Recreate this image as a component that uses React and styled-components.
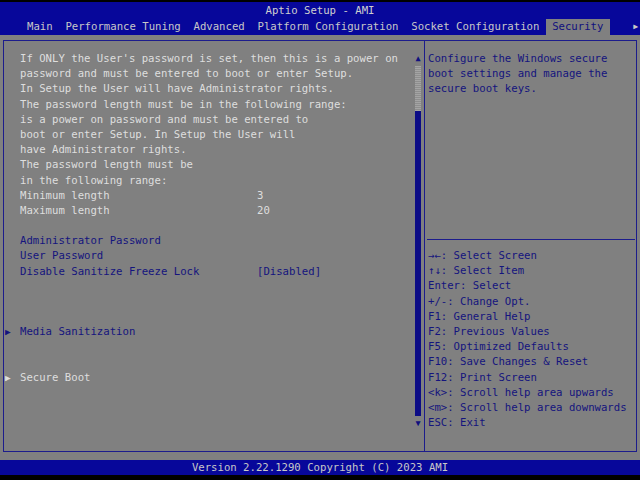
import React from 'react'
import styled, { createGlobalStyle } from 'styled-components'

const GlobalStyle = createGlobalStyle`
  html, body {
    margin: 0;
    padding: 0;
    background: #000;
  }
  * { box-sizing: border-box; }
`

const LINE = 15.2

const Screen = styled.div`
  width: 640px;
  height: 480px;
  display: flex;
  flex-direction: column;
  background: #000;
  font-family: "DejaVu Sans Mono", "Liberation Mono", monospace;
  font-size: 10.65px;
  overflow: hidden;
`
const Header = styled.div`
  margin-top: 2px;
  height: 33px;
  background: #07079a;
  display: flex;
  flex-direction: column;
`
const Title = styled.div`
  height: 17px;
  line-height: 17px;
  text-align: center;
  color: #cfcfcf;
`
const TabRow = styled.div`
  height: 16px;
  display: flex;
  align-items: stretch;
  padding-left: 20.6px;
  padding-right: 2px;
`
const Tab = styled.div`
  padding: 0 1ch;
  line-height: 16px;
  white-space: pre;
  color: ${p => (p.$active ? '#10107e' : '#c8c8c8')};
  background: ${p => (p.$active ? '#808080' : 'transparent')};
`
const TabMore = styled.div`
  margin-left: auto;
  line-height: 16px;
  font-size: 8px;
  color: #c8c8c8;
`
const Body = styled.div`
  flex: 1;
  background: #808080;
  padding: 5px 3px 8px 3px;
  display: flex;
`
const Frame = styled.div`
  flex: 1;
  display: flex;
  border: 1px solid #1c1c8c;
`
const LeftPanel = styled.div`
  width: 421px;
  display: flex;
  border-right: 1px solid #1c1c8c;
`
const Lines = styled.div`
  flex: 1;
  padding-top: 10px;
`
const Row = styled.div`
  height: ${LINE}px;
  line-height: ${LINE}px;
  display: flex;
  white-space: pre;
  color: ${p => (p.$tone === 'blue' ? '#14147e' : '#dedede')};
`
const Marker = styled.span`
  width: 16px;
  padding-left: 1px;
  font-size: 9.5px;
`
const Label = styled.span`
  width: 237px;
`
const Value = styled.span``

const Scroll = styled.div`
  width: 10px;
  padding: 10px 2px 0 0;
  display: flex;
  flex-direction: column;
  align-items: center;
`
const ScrollArrow = styled.div`
  height: ${LINE}px;
  line-height: ${LINE}px;
  font-size: 8.5px;
  color: #10107e;
`
const Track = styled.div`
  width: 6px;
  height: ${23 * LINE}px;
  display: flex;
  flex-direction: column;
`
const TrackLight = styled.div`
  height: 45px;
  background: repeating-linear-gradient(0deg, #a4a4a4 0 1px, #8e8e8e 1px 2px);
`
const Thumb = styled.div`
  flex: 1;
  background: #0c0c86;
`
const RightPanel = styled.div`
  flex: 1;
  padding: 10px 1px 0 2px;
  display: flex;
  flex-direction: column;
`
const HelpTop = styled.div`
  height: 189px;
  border-bottom: 1px solid #1c1c8c;
  padding-left: 1px;
`
const HelpKeys = styled.div`
  margin-top: 8px;
  padding-left: 1px;
`
const HelpLine = styled.div`
  height: ${LINE}px;
  line-height: ${LINE}px;
  white-space: pre;
  color: #14147e;
`
const Footer = styled.div`
  height: 15px;
  line-height: 15px;
  background: #07079a;
  color: #c8c8c8;
  text-align: center;
`
const BottomGap = styled.div`
  height: 5px;
  background: #000;
`

const tabs = ['Main', 'Performance Tuning', 'Advanced', 'Platform Configuration', 'Socket Configuration', 'Security']

const rows = [
  { text: "If ONLY the User's password is set, then this is a power on" },
  { text: 'password and must be entered to boot or enter Setup.' },
  { text: 'In Setup the User will have Administrator rights.' },
  { text: 'The password length must be in the following range:' },
  { text: 'is a power on password and must be entered to' },
  { text: 'boot or enter Setup. In Setup the User will' },
  { text: 'have Administrator rights.' },
  { text: 'The password length must be' },
  { text: 'in the following range:' },
  { text: 'Minimum length', value: '3' },
  { text: 'Maximum length', value: '20' },
  {},
  { text: 'Administrator Password', tone: 'blue' },
  { text: 'User Password', tone: 'blue' },
  { text: 'Disable Sanitize Freeze Lock', value: '[Disabled]', tone: 'blue' },
  {},
  {},
  {},
  { text: 'Media Sanitization', tone: 'blue', sub: true },
  {},
  {},
  { text: 'Secure Boot', sub: true },
]

const keys = [
  '\u2192\u2190: Select Screen',
  '\u2191\u2193: Select Item',
  'Enter: Select',
  '+/-: Change Opt.',
  'F1: General Help',
  'F2: Previous Values',
  'F5: Optimized Defaults',
  'F10: Save Changes & Reset',
  'F12: Print Screen',
  '<k>: Scroll help area upwards',
  '<m>: Scroll help area downwards',
  'ESC: Exit',
]

const App = () => {
  return (
    <Screen>
      <GlobalStyle />
      <Header>
        <Title>Aptio Setup - AMI</Title>
        <TabRow>
          {tabs.map(t => (
            <Tab key={t} $active={t === 'Security'}>{t}</Tab>
          ))}
          <TabMore>▶</TabMore>
        </TabRow>
      </Header>
      <Body>
        <Frame>
          <LeftPanel>
            <Lines>
              {rows.map((r, i) => (
                <Row key={i} $tone={r.tone}>
                  <Marker>{r.sub ? '▶' : ''}</Marker>
                  <Label>{r.text || ''}</Label>
                  {r.value ? <Value>{r.value}</Value> : null}
                </Row>
              ))}
            </Lines>
            <Scroll>
              <ScrollArrow>▲</ScrollArrow>
              <Track>
                <TrackLight />
                <Thumb />
              </Track>
              <ScrollArrow>▼</ScrollArrow>
            </Scroll>
          </LeftPanel>
          <RightPanel>
            <HelpTop>
              <HelpLine>Configure the Windows secure</HelpLine>
              <HelpLine>boot settings and manage the</HelpLine>
              <HelpLine>secure boot keys.</HelpLine>
            </HelpTop>
            <HelpKeys>
              {keys.map(k => (
                <HelpLine key={k}>{k}</HelpLine>
              ))}
            </HelpKeys>
          </RightPanel>
        </Frame>
      </Body>
      <Footer>Version 2.22.1290 Copyright (C) 2023 AMI</Footer>
      <BottomGap />
    </Screen>
  )
}

export default App
